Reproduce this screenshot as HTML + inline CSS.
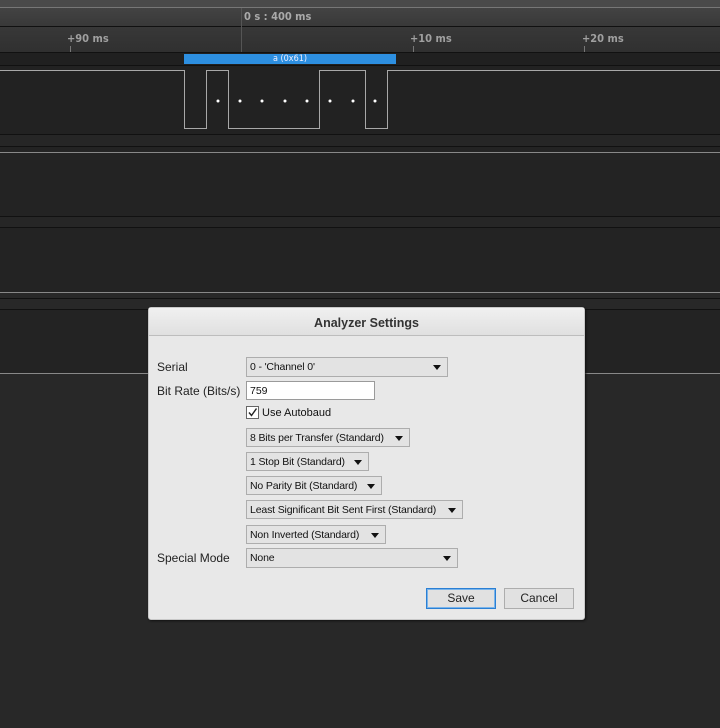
<!DOCTYPE html>
<html><head><meta charset="utf-8"><style>
*{margin:0;padding:0;box-sizing:border-box}
body{width:720px;height:728px;background:#282828;position:relative;overflow:hidden;font-family:"Liberation Sans","DejaVu Sans",sans-serif}
.a{position:absolute}
.t{color:#a0a0a0;font-size:11px;font-family:"DejaVu Sans Condensed","Liberation Sans",sans-serif;font-weight:bold}
.dl{position:absolute;left:0;width:720px;height:1px}
.cb{position:absolute;height:19px;background:#e3e3e3;border:1px solid #adadad;font-size:10.5px;letter-spacing:-0.15px;color:#111;line-height:19px;padding-left:3px;white-space:nowrap}
.cb:after{content:"";position:absolute;right:6px;top:7px;border-left:4px solid transparent;border-right:4px solid transparent;border-top:5px solid #111}
.lb{position:absolute;left:157px;font-size:12px;color:#222}
.btn{position:absolute;top:588px;width:70px;height:21px;background:#e1e1e1;border:1px solid #adadad;font-size:12px;color:#222;text-align:center;line-height:19px}
</style></head><body>
<div class="a" style="left:0;top:0;width:720px;height:7px;background:#4a4a4a"></div>
<div class="a" style="left:0;top:7px;width:720px;height:1px;background:#777"></div>
<div class="a" style="left:0;top:8px;width:720px;height:18px;background:linear-gradient(#434343,#393939)"></div>
<div class="dl" style="top:26px;background:#111"></div>
<div class="a" style="left:0;top:27px;width:720px;height:25px;background:linear-gradient(#383838,#303030)"></div>
<div class="a t" style="left:244px;top:10px;color:#aaa">0 s : 400 ms</div>
<div class="a" style="left:241px;top:8px;width:1px;height:44px;background:#555"></div>
<div class="a t" style="left:67px;top:32px">+90 ms</div>
<div class="a t" style="left:410px;top:32px">+10 ms</div>
<div class="a t" style="left:582px;top:32px">+20 ms</div>
<div class="a" style="left:70px;top:46px;width:1px;height:6px;background:#777"></div>
<div class="a" style="left:413px;top:46px;width:1px;height:6px;background:#777"></div>
<div class="a" style="left:584px;top:46px;width:1px;height:6px;background:#777"></div>
<div class="dl" style="top:52px;background:#111"></div>
<div class="a" style="left:0;top:53px;width:720px;height:12px;background:#202020"></div>
<div class="a" style="left:184px;top:54px;width:212px;height:10px;background:#2d8fe0;color:#eef;font-size:9px;line-height:10px;text-align:center;font-family:'DejaVu Sans Condensed',sans-serif">a (0x61)</div>
<div class="dl" style="top:65px;background:#111"></div>
<div class="a" style="left:0;top:66px;width:720px;height:68px;background:#222"></div>
<svg class="a" style="left:0;top:60px" width="720" height="80">
<polyline fill="none" stroke="#a8a8a8" stroke-width="1" points="0,10.5 184.5,10.5 184.5,68.5 206.5,68.5 206.5,10.5 228.5,10.5 228.5,68.5 319.5,68.5 319.5,10.5 365.5,10.5 365.5,68.5 387.5,68.5 387.5,10.5 720,10.5"/>
<g fill="#fff"><circle cx="218" cy="41" r="1.5"/><circle cx="240" cy="41" r="1.5"/><circle cx="262" cy="41" r="1.5"/><circle cx="285" cy="41" r="1.5"/><circle cx="307" cy="41" r="1.5"/><circle cx="330" cy="41" r="1.5"/><circle cx="353" cy="41" r="1.5"/><circle cx="375" cy="41" r="1.5"/></g>
</svg>
<div class="dl" style="top:134px;background:#111"></div>
<div class="a" style="left:0;top:135px;width:720px;height:11px;background:#262626"></div>
<div class="dl" style="top:146px;background:#111"></div>
<div class="a" style="left:0;top:147px;width:720px;height:69px;background:#232323"></div>
<div class="dl" style="top:152px;background:#888"></div>
<div class="dl" style="top:216px;background:#111"></div>
<div class="a" style="left:0;top:217px;width:720px;height:10px;background:#262626"></div>
<div class="dl" style="top:227px;background:#111"></div>
<div class="a" style="left:0;top:228px;width:720px;height:64px;background:#232323"></div>
<div class="dl" style="top:292px;background:#888"></div>
<div class="dl" style="top:298px;background:#111"></div>
<div class="dl" style="top:309px;background:#111"></div>
<div class="a" style="left:0;top:310px;width:720px;height:63px;background:#232323"></div>
<div class="dl" style="top:373px;background:#888"></div>

<div class="a" style="left:148px;top:307px;width:437px;height:313px;background:#e8e8e8;border:1px solid #c8c8c8;border-radius:3px;box-shadow:1px 1px 2px #111"></div>
<div class="a" style="left:149px;top:308px;width:435px;height:28px;background:linear-gradient(#f0f0f0,#e0e0e0);border-bottom:1px solid #bdbdbd;font-size:12.5px;font-weight:bold;color:#333;text-align:center;line-height:30px">Analyzer Settings</div>

<div class="lb" style="top:360px">Serial</div>
<div class="cb" style="left:246px;top:357px;width:202px;height:20px">0 - 'Channel 0'</div>
<div class="lb" style="top:384px">Bit Rate (Bits/s)</div>
<div class="a" style="left:246px;top:381px;width:129px;height:19px;background:#fff;border:1px solid #9a9a9a;font-size:10.5px;line-height:18px;padding-left:3px;color:#111">759</div>
<div class="a" style="left:246px;top:406px;width:13px;height:13px;background:#fff;border:1px solid #666"></div>
<svg class="a" style="left:247px;top:407px" width="11" height="11"><polyline points="2,5.5 4.5,8.5 9.5,1.5" fill="none" stroke="#222" stroke-width="1.4"/></svg>
<div class="a" style="left:262px;top:407px;font-size:11px;color:#111">Use Autobaud</div>
<div class="cb" style="left:246px;top:428px;width:164px">8 Bits per Transfer (Standard)</div>
<div class="cb" style="left:246px;top:452px;width:123px">1 Stop Bit (Standard)</div>
<div class="cb" style="left:246px;top:476px;width:136px">No Parity Bit (Standard)</div>
<div class="cb" style="left:246px;top:500px;width:217px">Least Significant Bit Sent First (Standard)</div>
<div class="cb" style="left:246px;top:525px;width:140px">Non Inverted (Standard)</div>
<div class="lb" style="top:551px">Special Mode</div>
<div class="cb" style="left:246px;top:548px;width:212px;height:20px">None</div>
<div class="btn" style="left:426px;border:1px solid #2a7fd4;box-shadow:inset 0 0 0 1px #7ab4ea">Save</div>
<div class="btn" style="left:504px">Cancel</div>
</body></html>
